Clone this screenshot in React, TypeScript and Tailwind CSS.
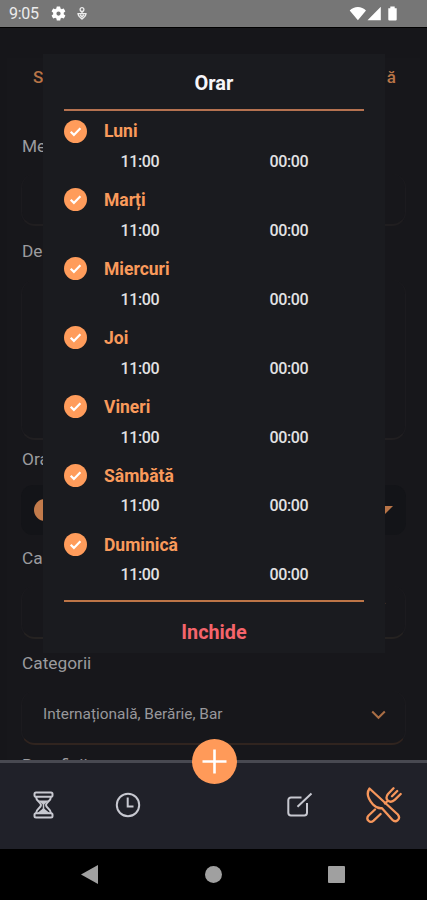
import React from "react";

const days = ["Luni", "Marți", "Miercuri", "Joi", "Vineri", "Sâmbătă", "Duminică"];

function StatusBar() {
  return (
    <header className="flex h-[27px] shrink-0 items-center bg-[#767676] pl-[9px] pr-[29px] text-white">
      <span className="w-[41px] pt-px text-[16px] tracking-[-0.3px] text-[#ececec]">9:05</span>
      <svg className="h-[17px] w-[17px]" viewBox="0 0 24 24" fill="currentColor">
        <path d="M19.4 13a7.5 7.5 0 0 0 0-2l2.1-1.7a.5.5 0 0 0 .1-.6l-2-3.5a.5.5 0 0 0-.6-.2l-2.5 1a7.3 7.3 0 0 0-1.7-1l-.4-2.6a.5.5 0 0 0-.5-.4h-4a.5.5 0 0 0-.5.4L9 5.1a7.7 7.7 0 0 0-1.7 1L4.9 5a.5.5 0 0 0-.6.2l-2 3.5a.5.5 0 0 0 .1.6L4.5 11a7.9 7.9 0 0 0 0 2l-2.1 1.7a.5.5 0 0 0-.1.6l2 3.5c.1.2.4.3.6.2l2.5-1a7.3 7.3 0 0 0 1.7 1l.4 2.6c0 .2.2.4.5.4h4c.2 0 .5-.2.5-.4l.4-2.6a7.7 7.7 0 0 0 1.7-1l2.5 1c.2.1.5 0 .6-.2l2-3.5a.5.5 0 0 0-.1-.6zM12 15a3 3 0 1 1 0-6 3 3 0 0 1 0 6z" />
      </svg>
      <svg className="ml-[10px] h-[13px] w-[10px] text-[#ececec]" viewBox="0 0 10 13" fill="none" stroke="currentColor" strokeWidth="1.3">
        <circle cx="5" cy="2.6" r="1.9" />
        <path d="M5 4.5v3M1 6.6h8C9 9.3 7 10.6 5 12 3 10.6 1 9.3 1 6.6zM3 7.8l2 2 2-2" />
      </svg>
      <svg className="ml-auto h-[15px] w-[49px]" viewBox="0 0 49 15" fill="currentColor">
        <path d="M.7 4.5C5-.3 12.7-.3 17 4.5L8.9 14.3zM18.5 14.3L31.8.7v13.6zM39.3 2.3h2V.6h4.4v1.7h2v11.2q0 1-1 1h-6.4q-1 0-1-1z" />
      </svg>
    </header>
  );
}

function Label({ children }: { children: React.ReactNode }) {
  return <div className="h-[24px] pl-[22px] text-[17.3px] leading-[22px] text-[#9b9b9e]">{children}</div>;
}

function Field({ className, children }: { className: string; children?: React.ReactNode }) {
  return (
    <div className={"mx-[21px] flex items-center rounded-[14px] border-x border-b-2 border-x-[#1c1b1f] " + className}>
      {children}
    </div>
  );
}

function Chevron() {
  return (
    <svg className="ml-auto h-[10px] w-[15px]" viewBox="0 0 15 10" fill="none" stroke="#aa6e45" strokeWidth="2">
      <path d="M1.2 1.5l6.300 6.3 6.300-6.3" />
    </svg>
  );
}

function Form() {
  return (
    <main className="h-[733px] shrink-0 overflow-hidden bg-[#16161a]">
      <div className="h-[31px] border-t border-black" />
      <div className="mx-[7px] h-[702px] bg-[#17171b]">
        <div className="-mx-[7px]">
          <div className="flex h-[38px] items-center justify-between pl-[33px] pr-[31px] pt-px text-[17px] font-medium text-[#b87447]">
            <span>S</span>
            <span>ă</span>
          </div>
          <div className="h-[39px]" />
          <Label>Me</Label>
          <Field className="mt-[15px] h-[52px] border-b-[#201e20]" />
          <div className="h-[14px]" />
          <Label>De</Label>
          <Field className="mt-[16px] h-[160px] border-b-[#211f21]" />
          <div className="h-[8px]" />
          <Label>Ora</Label>
          <div className="mx-[21px] mt-[13px] flex h-[50px] items-center justify-between rounded-xl bg-[#131418] pl-[13px] pr-[13px]">
            <span className="h-[22px] w-[22px] rounded-full bg-[#c37b4b]" />
            <svg className="h-[8px] w-[16px]" viewBox="0 0 16 8" fill="#b87447"><path d="M0 0h16L8 8z" /></svg>
          </div>
          <div className="h-[12px]" />
          <Label>Ca</Label>
          <Field className="mt-[15px] h-[53px] border-b-[#252221] pb-[12px] pr-[19px]"><Chevron /></Field>
          <div className="h-[13px]" />
          <Label>Categorii</Label>
          <Field className="mt-[15px] h-[54px] border-b-[#30241f] pb-[4px] pl-[21px] pr-[19px]">
            <span className="text-[15.4px] text-[#98989b]">Internațională, Berărie, Bar</span>
            <Chevron />
          </Field>
          <div className="h-[9px]" />
          <Label>Beneficii</Label>
        </div>
      </div>
    </main>
  );
}

function DayRow({ day }: { day: string }) {
  return (
    <li className="h-[68.9px]">
      <div className="flex h-[40px] items-center">
        <svg className="h-[23px] w-[23px]" viewBox="0 0 23 23">
          <circle cx="11.5" cy="11.5" r="11.5" fill="#ff9c5b" />
          <path d="M6.7 11.8l3.2 3.1 6.5-6.6" fill="none" stroke="white" strokeWidth="2.2" />
        </svg>
        <span className="ml-[17px] pt-px text-[17.5px] font-bold text-[#f99a5b]">{day}</span>
      </div>
      <div className="flex h-[22px] items-center text-[16px] font-medium tracking-[-0.4px] text-[#e2e2e3]">
        <span className="w-[149px] shrink-0 pl-[56.5px]">11:00</span>
        <span className="pl-[56.5px]">00:00</span>
      </div>
    </li>
  );
}

function ScheduleDialog() {
  return (
    <section className="absolute left-[43px] top-[54px] h-[599px] w-[342px] bg-[#1a1b1f] px-[21px]">
      <h1 className="flex h-[54px] items-center justify-center pt-[3px] text-[20px] font-bold text-[#f6f6fa]">Orar</h1>
      <div className="mt-px h-[2px] bg-[#b57250]" />
      <ul className="h-[489px]">
        {days.map((day) => <DayRow key={day} day={day} />)}
      </ul>
      <div className="h-[2px] bg-[#bd7547]" />
      <button className="flex h-[51px] w-full items-center justify-center pt-[11px] text-[19.8px] font-bold text-[#f5646b]">Inchide</button>
    </section>
  );
}

function TabBar() {
  return (
    <nav className="relative h-[89px] shrink-0 border-t-[3px] border-[#484951] bg-[#202129] text-[#c7c8d0]">
      <div className="flex h-full items-center pb-[3px] pl-[33px] pr-[24px]">
        <svg className="h-[28px] w-[21px]" viewBox="0 0 21 28" fill="none" stroke="currentColor" strokeWidth="2" strokeLinejoin="round">
          <rect x="1.5" y="1.5" width="18" height="4.2" rx="1.5" />
          <rect x="1.5" y="22.3" width="18" height="4.2" rx="1.5" />
          <path d="M3 5.7c0 4.5 5 5.3 5 8.3s-5 3.8-5 8.3M18 5.7c0 4.5-5 5.3-5 8.3s5 3.8 5 8.3" />
          <path d="M5.5 9.5h10L10.5 14zM4.5 22l6-5 6 5z" fill="currentColor" stroke="none" />
          <path d="M10.5 13v6" strokeWidth="1.5" />
        </svg>
        <svg className="ml-[61px] h-[26px] w-[26px]" viewBox="0 0 26 26" fill="none" stroke="currentColor" strokeWidth="2">
          <circle cx="13" cy="13" r="11.2" />
          <path d="M12.7 5.5v9h5.8" />
        </svg>
        <svg className="ml-[145px] h-[26px] w-[27px]" viewBox="0 0 27 26" fill="none" stroke="currentColor" strokeWidth="2" strokeLinejoin="round">
          <path d="M15.5 5.5H5a2.7 2.7 0 0 0-2.7 2.7v12.5A2.7 2.7 0 0 0 5 23.4h13.3a2.7 2.7 0 0 0 2.7-2.7V11M11.5 14.7L25.5 1.500" />
        </svg>
        <svg className="ml-auto h-[38px] w-[38px] text-[#f6965b]" viewBox="0 0 38 38" fill="none" stroke="currentColor" strokeWidth="2.3" strokeLinejoin="round" strokeLinecap="round">
          <path d="M4.5 2.5C1 7.5 3.5 13.5 8 18.5q4 4.300 9 3.700L27.300 33.700c3.700 3.800 9-1 5.500-5.200z" />
          <path d="M10 23.5L3.600 29.500c-3.400 4 1.400 8.300 5 5.200l7-6.700M20 17.500l3-3M28.500 2.300L23 8c-4.500 5.500 2 10.500 7 5.700l5.700-5.700M32.200 5L27 10.200" />
        </svg>
      </div>
      <button aria-label="+" className="absolute left-[191.5px] top-[-24.5px] flex h-[45px] w-[45px] items-center justify-center rounded-full bg-[#ff9a59]">
        <svg className="h-[25px] w-[25px]" viewBox="0 0 25 25" stroke="white" strokeWidth="2.6"><path d="M12.5.5v24M.5 12.5h24" /></svg>
      </button>
    </nav>
  );
}

function SystemNavigation() {
  return (
    <footer className="flex h-[51px] shrink-0 items-center bg-black pl-[81px]">
      <svg className="h-[19px] w-[17px]" viewBox="0 0 17 19" fill="#a0a0a0"><path d="M17 0v19L0 9.5z" /></svg>
      <div className="ml-[107px] h-[17px] w-[17px] rounded-full bg-[#a0a0a0]" />
      <div className="ml-[106px] h-[17px] w-[17px] rounded-[1px] bg-[#a0a0a0]" />
    </footer>
  );
}

export default function App() {
  return (
    <div className="relative flex h-[900px] w-[427px] flex-col overflow-hidden font-[Roboto,sans-serif]">
      <StatusBar />
      <Form />
      <TabBar />
      <SystemNavigation />
      <ScheduleDialog />
    </div>
  );
}
